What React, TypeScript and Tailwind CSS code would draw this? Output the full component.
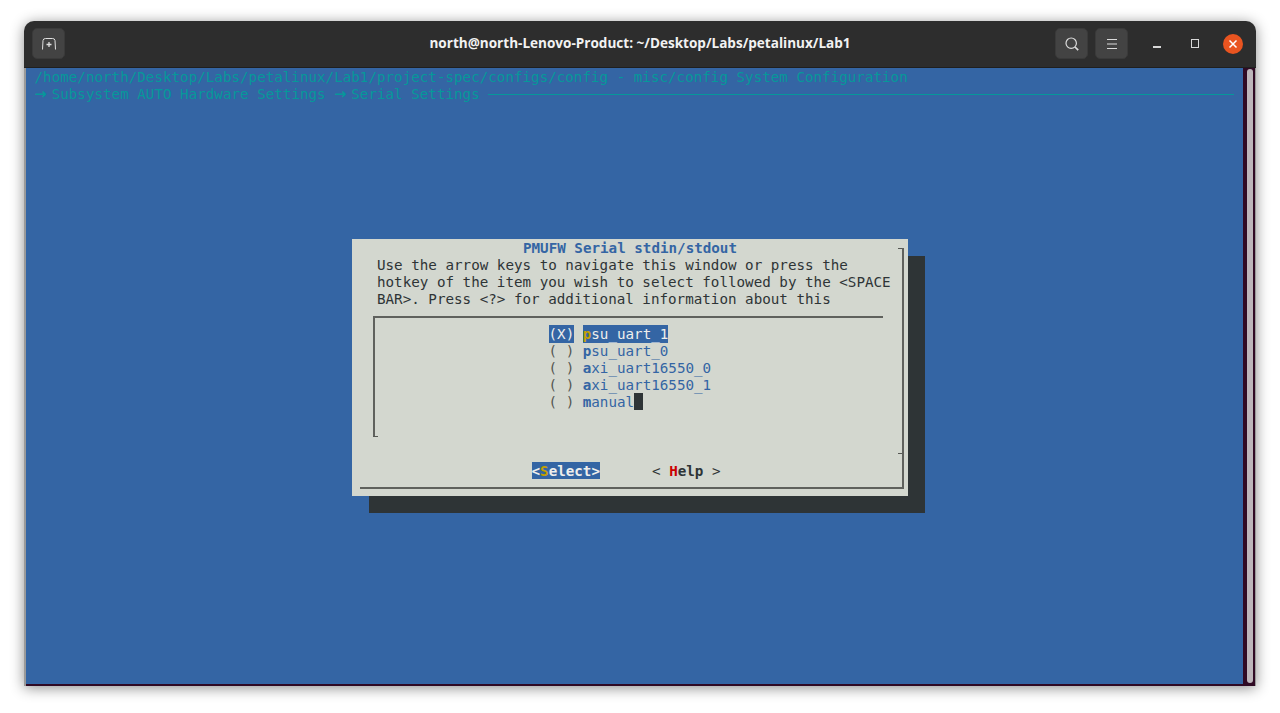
const mono = "font-['DejaVu_Sans_Mono','Liberation_Mono',monospace]";

function HeaderButton({ children }: { children: React.ReactNode }) {
  return (
    <div className="flex h-[31px] w-[33px] items-center justify-center rounded-[5px] border border-[#3a3a3a] bg-[#434343]">
      {children}
    </div>
  );
}

function Option({ mark, hotkey, rest, active, cursor }: { mark: string; hotkey: string; rest: string; active?: boolean; cursor?: boolean }) {
  return (
    <div className="flex h-[17px] pl-[173.5px] leading-[19px]">
      <span className={active ? "inline-block h-[18px] bg-[#3465a4] text-[#eeeeec]" : "text-[#555753]"}>({mark})</span>
      <span className="w-[8.57px]" />
      <span className={active ? "inline-block h-[18px] bg-[#3465a4] text-[#eeeeec]" : "text-[#3465a4]"}>
        <span className={active ? "font-bold text-[#c4a000]" : "font-bold text-[#3465a4]"}>{hotkey}</span>
        {rest}
      </span>
      {cursor && <span className="h-[17px] w-[8.5px] bg-[#2e3436]" />}
    </div>
  );
}

function Arrow() {
  return <span className="inline-block w-[17.14px] font-['DejaVu_Sans',sans-serif] text-[14.5px] font-bold">→</span>;
}

export default function App() {
  return (
    <div className="h-[713px] w-[1280px] overflow-hidden bg-white px-[24px] pt-[21px]">
      <div className="h-[665px] w-[1232px] overflow-hidden rounded-t-[10px] bg-[#2d2d2d] shadow-[0_2px_14px_rgba(0,0,0,0.45)]">
        <div className="relative flex h-[47px] items-center justify-between border-b border-[#1f1f1f] pb-[1px] pl-[8px] pr-[13px]">
          <HeaderButton>
            <svg width="16" height="14" viewBox="0 0 16 14" fill="none" stroke="#e0e0e0" strokeWidth="1">
              <path d="M1.5 12.5 L2 3.5 Q2.2 1.5 4.5 1.5 H11.5 Q13.8 1.5 14 3.5 L14.5 12.5" />
              <path d="M8 5 V10 M5.5 7.5 H10.5" strokeWidth="1.3" />
            </svg>
          </HeaderButton>
          <div className="absolute inset-x-0 top-[13px] text-center font-['Open_Sans','Noto_Sans',sans-serif] text-[13.55px] leading-[19px] font-bold text-[#f2f2f2]">
            north@north-Lenovo-Product: ~/Desktop/Labs/petalinux/Lab1
          </div>
          <div className="flex items-center">
            <HeaderButton>
              <svg width="16" height="16" viewBox="0 0 16 16" fill="none" stroke="#dcdcdc" strokeWidth="1.2">
                <circle cx="7.2" cy="7.2" r="5.2" />
                <path d="M11 11 L14.2 14.2" strokeWidth="1.7" />
              </svg>
            </HeaderButton>
            <div className="ml-[7px]">
              <HeaderButton>
                <svg width="12" height="12" viewBox="0 0 12 12" stroke="#dcdcdc" strokeWidth="1.2">
                  <path d="M1 1.5 H11 M1 6 H11 M1 10.5 H11" />
                </svg>
              </HeaderButton>
            </div>
            <div className="ml-[25px] h-[2px] w-[8px] translate-y-[3px] bg-[#d8d8d8]" />
            <div className="ml-[30px] h-[9px] w-[8px] border-[1.5px] border-[#d8d8d8]" />
            <div className="ml-[24px] flex h-[20px] w-[20px] items-center justify-center rounded-full bg-[#e95420]">
              <svg width="10" height="10" viewBox="0 0 10 10" stroke="#ffffff" strokeWidth="1.5">
                <path d="M1.5 1.5 L8.5 8.5 M8.5 1.5 L1.5 8.5" />
              </svg>
            </div>
          </div>
        </div>

        <div className="flex h-[618px] border-x-2 border-x-[#9a9a9a] border-r-[1px] bg-[#300a24] pb-[2px]">
          <div className={`${mono} relative h-[616px] w-[1217px] bg-[#3465a4] pt-[1px] text-[14.22px] leading-[17px] whitespace-pre`}>
            <div className="h-[17px] pl-[8.57px] text-[#06989a]">
              /home/north/Desktop/Labs/petalinux/Lab1/project-spec/configs/config - misc/config System Configuration
            </div>
            <div className="flex h-[17px] pl-[8.57px] text-[#06989a]">
              <Arrow />
              <span>Subsystem AUTO Hardware Settings </span>
              <Arrow />
              <span>Serial Settings </span>
              <span className="mt-[8px] h-px w-[746px] bg-[#06989a]" />
            </div>

            <div className="relative ml-[326px] mt-[136px] h-[257px] w-[556px] bg-[#d3d7cf] pl-[8px] pr-[4px] pt-[9px] shadow-[17px_17px_0_#2e3436]">
              <div className="relative flow-root h-[241px] border-b-2 border-r-2 border-[#5f615d]">
                <div className="absolute right-0 top-0 h-px w-[4px] bg-[#555753]" />
                <div className="absolute bottom-[33px] right-0 h-px w-[4px] bg-[#555753]" />
                <div className="-mt-[8px] h-[17px] text-center font-bold text-[#3465a4]">
                  <span className="relative left-[-1px]">PMUFW Serial stdin/stdout</span>
                </div>
                <div className="pl-[17px] text-[#2e3436]">
                  <div>Use the arrow keys to navigate this window or press the</div>
                  <div>hotkey of the item you wish to select followed by the &lt;SPACE</div>
                  <div>BAR&gt;. Press &lt;?&gt; for additional information about this</div>
                </div>
                <div className="relative ml-[13px] mt-[8px] h-[121px] w-[510px] border-l-2 border-t-2 border-[#5f615d] pt-[7px]">
                  <div className="absolute -left-[2px] bottom-0 h-px w-[5px] bg-[#555753]" />
                  <Option mark="X" hotkey="p" rest="su_uart_1" active />
                  <Option mark=" " hotkey="p" rest="su_uart_0" />
                  <Option mark=" " hotkey="a" rest="xi_uart16550_0" />
                  <Option mark=" " hotkey="a" rest="xi_uart16550_1" />
                  <Option mark=" " hotkey="m" rest="anual" cursor />
                </div>
                <div className="mt-[25px] flex h-[17px] pl-[171.5px] leading-[19px] font-bold">
                  <span className="inline-block h-[17px] bg-[#3465a4] text-[#eeeeec]">
                    &lt;<span className="text-[#c4a000]">S</span>elect&gt;
                  </span>
                  <span className="ml-[52px] text-[#2e3436]">
                    <span className="font-normal">&lt; </span>
                    <span className="text-[#cc0000]">H</span>elp
                    <span className="font-normal"> &gt;</span>
                  </span>
                </div>
              </div>
            </div>
          </div>
          <div className="flex flex-1 justify-center pt-[1px]">
            <div className="ml-[1px] h-[614px] w-[6px] rounded-full bg-[#bdb6bb]" />
          </div>
        </div>
      </div>
    </div>
  );
}
